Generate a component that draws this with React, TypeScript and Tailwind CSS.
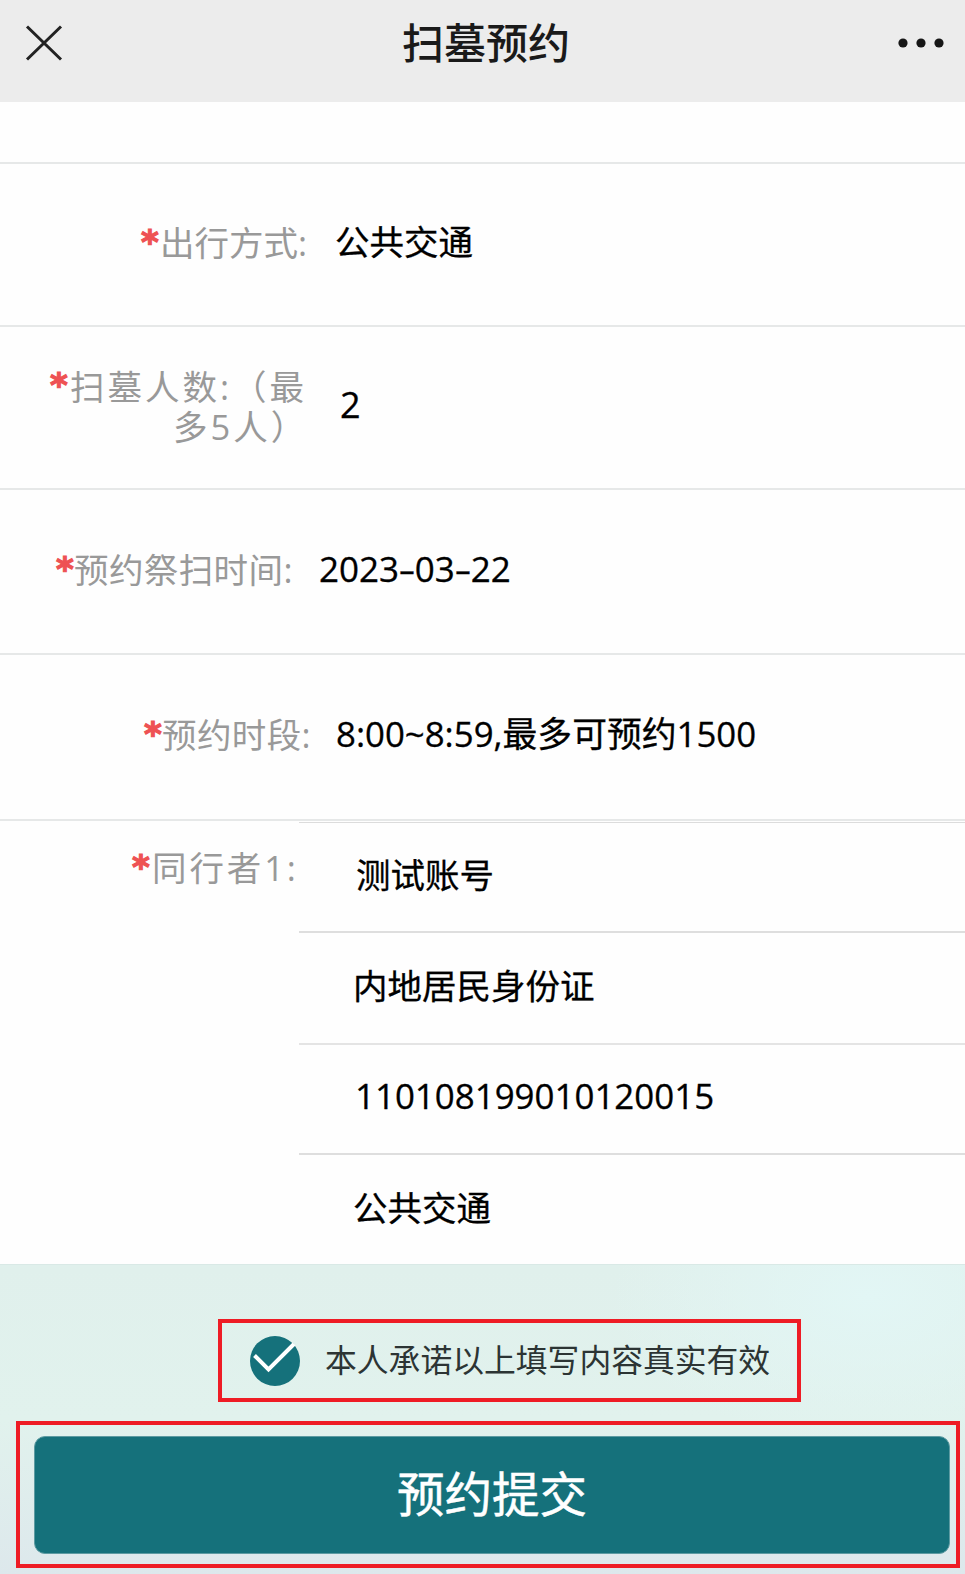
import type { ReactNode } from "react";

function Star() {
  return (
    <span className="-mt-px w-[17px] shrink-0 text-left font-['DejaVu_Sans'] text-[34px] leading-[40px] font-bold tracking-normal text-[#ee5253] [-webkit-text-stroke:1.2px_#ee5253]">
      *
    </span>
  );
}

function Dash() {
  return <span className="inline-block w-[15.8px] scale-x-150 text-center">-</span>;
}

type RowProps = {
  rowClass: string;
  labelClass: string;
  valueClass: string;
  label: ReactNode;
  value: ReactNode;
};

function Row({ rowClass, labelClass, valueClass, label, value }: RowProps) {
  return (
    <div className={`flex items-start border-b-2 border-[#e6e8e8] ${rowClass}`}>
      <div className={`flex shrink-0 items-start whitespace-nowrap text-[#999] ${labelClass}`}>
        <Star />
        {label}
      </div>
      <div className={`whitespace-nowrap text-black [-webkit-text-stroke:0.3px_#000] ${valueClass}`}>{value}</div>
    </div>
  );
}

export default function App() {
  return (
    <div className="flex h-[1574px] w-[965px] flex-col overflow-hidden bg-[#fefefe] font-['Open_Sans','Noto_Sans_CJK_SC',sans-serif] text-[34.5px] leading-[40px]">
      <header className="flex h-[102px] shrink-0 items-start justify-between bg-[#ececec] text-[#1a1a1a]">
        <svg className="mt-[25px] ml-[25px] h-[36px] w-[38px]" viewBox="0 0 38 36" fill="none" stroke="#222" strokeWidth="3">
          <path d="M2 1.5 36 34.5M36 1.5 2 34.5" />
        </svg>
        <h1 className="mt-[13px] ml-[12px] text-[42px] leading-[60px] font-medium">扫墓预约</h1>
        <svg className="mt-[37px] mr-[20px] h-[12px] w-[48px]" viewBox="0 0 48 12" fill="#161616">
          <circle cx="6" cy="6" r="4.6" />
          <circle cx="24" cy="6" r="4.6" />
          <circle cx="42" cy="6" r="4.6" />
        </svg>
      </header>

      <main className="flex shrink-0 flex-col">
        <div className="h-[62px] border-b-2 border-[#e6e8e8]" />
        <Row
          rowClass="h-[163px]"
          labelClass="ml-[141px] mt-[59px] w-[194px]"
          valueClass="mt-[58px]"
          label={<span className="ml-[2px]">出行方式:</span>}
          value="公共交通"
        />
        <Row
          rowClass="h-[163px]"
          labelClass="ml-[50px] mt-[39px] w-[290px]"
          valueClass="mt-[58px] text-[36px]"
          label={
            <div className="mt-px ml-[3px] flex flex-col tracking-[3px]">
              <span>扫墓人数:（最</span>
              <span className="pl-[103px]">多5人）</span>
            </div>
          }
          value="2"
        />
        <Row
          rowClass="h-[165px]"
          labelClass="ml-[56px] mt-[60px] w-[263px]"
          valueClass="mt-[59px] text-[35px]"
          label={<span className="ml-px tracking-[0.4px]">预约祭扫时间:</span>}
          value={
            <>
              2023
              <Dash />
              03
              <Dash />
              22
            </>
          }
        />
        <Row
          rowClass="h-[166px]"
          labelClass="ml-[144px] mt-[60px] w-[192px]"
          valueClass="mt-[59px] text-[34.8px]"
          label={<span className="ml-px tracking-[0.4px]">预约时段:</span>}
          value="8:00~8:59,最多可预约1500"
        />

        <section className="flex h-[443px] items-start">
          <div className="mt-[27px] ml-[132px] flex w-[167px] shrink-0 items-start whitespace-nowrap text-[#999]">
            <Star />
            <span className="ml-[3px] tracking-[2.9px]">同行者1:</span>
          </div>
          <div className="flex grow flex-col pt-px text-black [-webkit-text-stroke:0.3px_#000]">
            <div className="h-[111px] border-t border-b-2 border-t-[#dcdcdc] border-b-[#dedede] pt-[32px] pl-[57px]">测试账号</div>
            <div className="h-[112px] border-b-2 border-[#e4e4e4] pt-[33px] pl-[54px]">内地居民身份证</div>
            <div className="h-[110px] border-b-2 border-[#dedede] pt-[31px] pl-[56px] text-[34.9px]">110108199010120015</div>
            <div className="pt-[33px] pl-[54px]">公共交通</div>
          </div>
        </section>
      </main>

      <footer className="flex grow flex-col items-start border-t border-[#d9e9e6] bg-[radial-gradient(ellipse_260px_150px_at_90%_10%,#e2f6f5_0%,transparent_100%),linear-gradient(to_bottom,#e0f0ec_0%,#e1f2ed_50%,#dde8ec_100%)]">
        <div className="mt-[54px] ml-[218px] flex h-[83px] w-[583px] items-center border-4 border-[#ee1c25] pl-[28px]">
          <svg className="h-[50px] w-[50px] shrink-0" viewBox="0 0 50 50" fill="none">
            <circle cx="25" cy="25" r="25" fill="#15717b" />
            <path d="M4.5 19.5 18.5 33.5 44 8" stroke="#fff" strokeWidth="4" />
          </svg>
          <span className="-mt-px ml-[25px] text-[31.8px] whitespace-nowrap text-[#2c3434]">本人承诺以上填写内容真实有效</span>
        </div>
        <div className="mt-[19px] ml-[16px] flex h-[147px] w-[944px] items-start border-4 border-[#ee1c25] pt-[11px] pl-[14px]">
          <button className="h-[118px] w-[916px] rounded-[11px] border border-[#5d9ba2] bg-[#15717b] pb-[2px] text-[47.5px] leading-[60px] text-white [-webkit-text-stroke:0.5px_#fff]">
            预约提交
          </button>
        </div>
      </footer>
    </div>
  );
}
